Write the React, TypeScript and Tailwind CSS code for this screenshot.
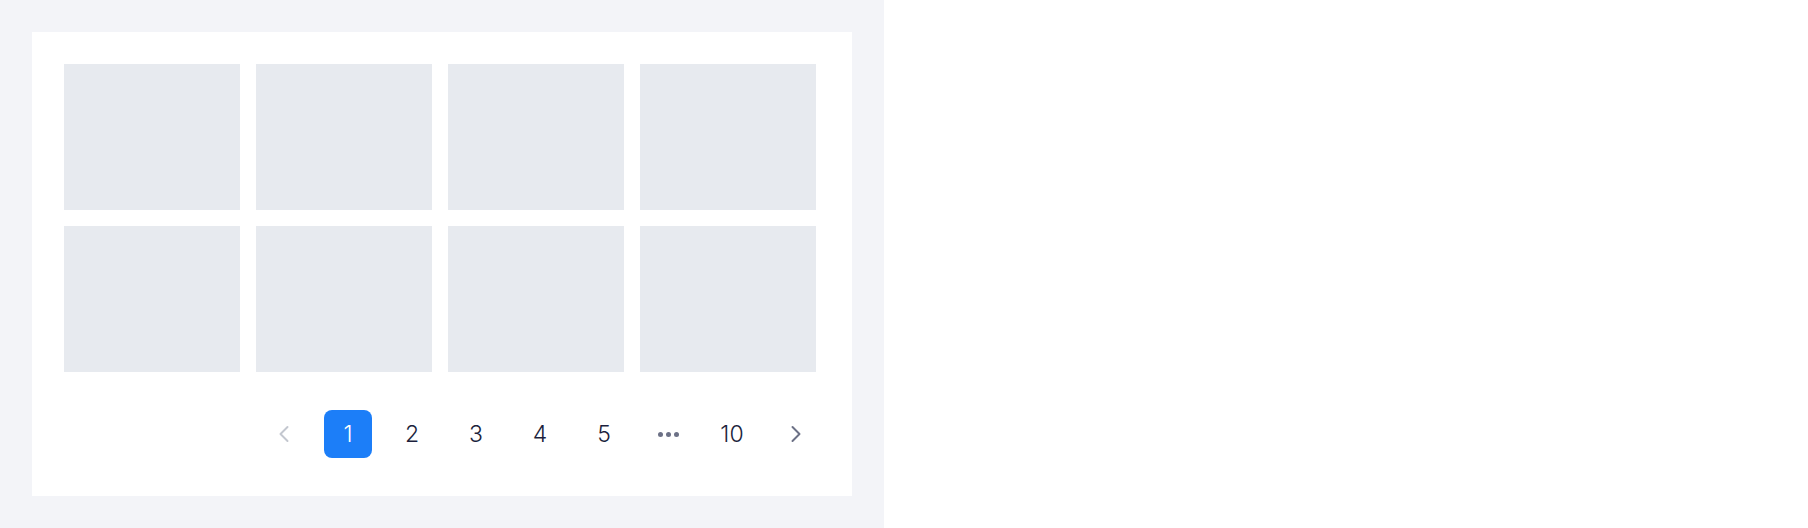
import { ChevronLeft, ChevronRight } from "lucide-react";

const pages = ["1", "2", "3", "4", "5", "...", "10"];

export default function App() {
  const tiles = Array.from({ length: 8 }, (_, i) => i);

  return (
    <div className="flex h-[528px] w-[1808px] bg-white font-['Inter',sans-serif]">
      <div className="w-[884px] bg-[#f3f4f8] p-8">
        <div className="flex h-[464px] flex-col bg-white p-8">
          <div className="grid grid-cols-[repeat(4,176px)] gap-4">
            {tiles.map((t) => (
              <div key={t} className="h-[146px] bg-[#e7eaef]"></div>
            ))}
          </div>

          <div className="mt-[38px] flex justify-end gap-4">
            <button className="flex h-12 w-12 items-center justify-center text-[#c3c7cf]">
              <ChevronLeft size={28} strokeWidth={1.7} />
            </button>
            {pages.map((p) => {
              if (p === "...") {
                return (
                  <div key={p} className="flex h-12 w-12 items-center justify-center gap-[3px]">
                    <span className="h-[5px] w-[5px] rounded-full bg-[#6c7186]"></span>
                    <span className="h-[5px] w-[5px] rounded-full bg-[#6c7186]"></span>
                    <span className="h-[5px] w-[5px] rounded-full bg-[#6c7186]"></span>
                  </div>
                );
              }
              const active = p === "1";
              return (
                <button
                  key={p}
                  className={
                    active
                      ? "flex h-12 w-12 items-center justify-center rounded-lg bg-[#1c7ef8] text-[23px] font-light text-white"
                      : "flex h-12 w-12 items-center justify-center rounded-lg text-[23px] font-light text-[#1c1f3d]"
                  }
                >
                  {p}
                </button>
              );
            })}
            <button className="flex h-12 w-12 items-center justify-center text-[#6c7186]">
              <ChevronRight size={28} strokeWidth={1.7} />
            </button>
          </div>
        </div>
      </div>
    </div>
  );
}
